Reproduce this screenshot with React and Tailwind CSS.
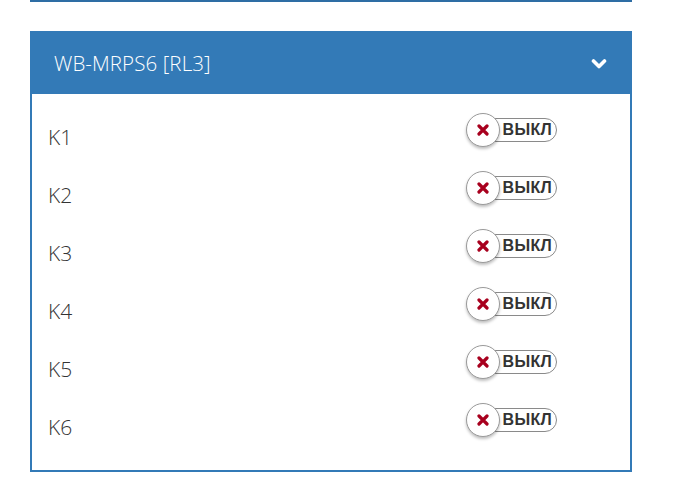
import React from "react";

function Toggle() {
  return (
    <div className="relative w-[92px] h-[34px]">
      <div className="absolute left-[4px] top-[5px] w-[87px] h-[24px] rounded-full border border-[#8a8a8a] bg-white flex items-center justify-end pr-[4px]">
        <span className="text-[16px] font-bold text-[#333] leading-none tracking-[0.3px]" style={{ fontFamily: '"Liberation Sans", Arial, sans-serif' }}>ВЫКЛ</span>
      </div>
      <div className="absolute left-0 top-0 w-[34px] h-[34px] rounded-full bg-white border border-[#9a9a9a] shadow-[0_2px_3px_rgba(0,0,0,0.25)] flex items-center justify-center">
        <svg width="12" height="12" viewBox="0 0 12 12">
          <path d="M2 2 L10 10 M10 2 L2 10" stroke="#a8001e" strokeWidth="3.2" strokeLinecap="round" />
        </svg>
      </div>
    </div>
  );
}

export default function App() {
  const rows = ["K1", "K2", "K3", "K4", "K5", "K6"];
  return (
    <div className="w-[690px] h-[479px] bg-white overflow-hidden" style={{ fontFamily: '"Open Sans", "Noto Sans", sans-serif' }}>
      <div className="ml-[30px] w-[602px] h-[2px] bg-[#2e6da4]" />
      <div className="ml-[30px] mt-[29px] w-[602px] border-2 border-[#337ab7]">
        <div className="h-[61px] bg-[#337ab7] flex items-center justify-between pl-[22px] pr-[23px]">
          <span className="text-white text-[20.5px] font-light tracking-[0.1px]">WB-MRPS6 [RL3]</span>
          <svg width="16" height="12" viewBox="0 0 16 12">
            <path d="M2.5 3 L8 8.5 L13.5 3" stroke="#fff" strokeWidth="3.6" fill="none" strokeLinecap="round" strokeLinejoin="round" />
          </svg>
        </div>
        <div className="pt-[15px] pb-[13px] pl-[16px]">
          {rows.map((r) => (
            <div key={r} className="h-[58px] flex">
              <div className="w-[418px] flex items-center text-[21px] text-[#333] font-light">{r}</div>
              <div className="pt-[4px]">
                <Toggle />
              </div>
            </div>
          ))}
        </div>
      </div>
    </div>
  );
}
